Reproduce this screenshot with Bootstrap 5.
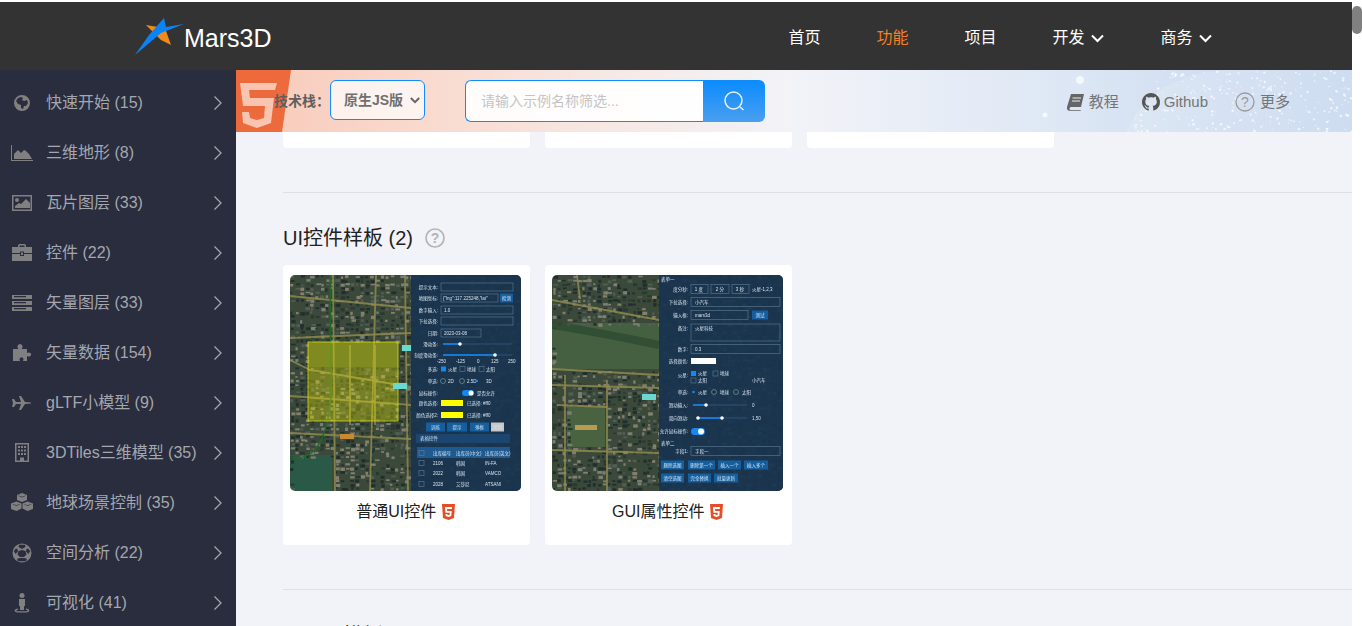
<!DOCTYPE html>
<html lang="zh-CN">
<head>
  <meta charset="UTF-8">
  <title>Mars3D 功能示例</title>
  <meta name="viewport" content="width=device-width, initial-scale=1.0">
  <link href="https://cdn.jsdelivr.net/npm/bootstrap@5.3.0/dist/css/bootstrap.min.css" rel="stylesheet">
  <style>
    html, body { height: 100%; overflow: hidden; }
    body {
      font-family: "Liberation Sans", "Noto Sans CJK SC", sans-serif;
      background: #fff;
      padding-top: 2px;
    }
    .page-wrap { height: 624px; }
    .page-main { width: 1352px; }

    /* 滚动条 */
    .fake-scroll { width: 10px; padding-top: 4px; }
    .fake-thumb { height: 28px; background: #808080; border-radius: 5px; }

    /* 顶部导航 */
    .top-bar { height: 68px; flex: none; background: #333; padding: 4px 0 0 134px; }
    .brand-text { font-size: 25px; color: #fff; line-height: 1; }
    .top-links { margin-left: 517px; gap: 56px; }
    .top-links a { color: #fff; font-size: 16px; text-decoration: none; display: flex; align-items: center; gap: 6px; }
    .top-links a.on { color: #f4801f; }
    .top-links a.has-drop { margin-right: 1px; }

    /* 左侧菜单 */
    .side-menu { width: 236px; background: #2a2d3e; padding-top: 8px; flex: none; }
    .side-item {
      height: 50px; padding-left: 11px; padding-right: 13px;
      color: #a4a7ae; font-size: 16px; text-decoration: none;
    }
    .side-item .ico { width: 22px; height: 22px; margin-right: 13px; fill: #808080; flex: none; }
    .side-item .arrow { width: 10px; height: 16px; margin-left: auto; flex: none; }

    /* 工具条 */
    .content-col { background: #f2f3f8; min-width: 0; }
    .tool-bar {
      height: 62px; flex: none; overflow: hidden; color: #666;
      background: linear-gradient(90deg, #f8c9b8 0%, #f9d9cd 16%, #f6e9e5 34%, #f2f3f8 50%, #dfe8f5 72%, #c5d7ee 100%);
    }
    .bar-art { position: absolute; left: 0; top: 0; }
    .tool-inner { position: relative; padding-left: 38px; height: 100%; }
    .stack-label { font-size: 14px; font-weight: 700; color: #5f5f5f; width: 56px; white-space: nowrap; }
    .stack-select.form-select {
      width: 95px; height: 40px; margin-bottom: 2px; padding: 0 20px 0 13px; font-size: 14px; font-weight: 700; color: #707070;
      border-color: #0d8bff; background-color: rgba(255,255,255,.7);
      background-image: url("data:image/svg+xml,%3csvg xmlns='http://www.w3.org/2000/svg' viewBox='0 0 12 8'%3e%3cpath fill='none' stroke='%23666' stroke-width='2.400' d='M1 1l5 5l5-5'/%3e%3c/svg%3e");
      background-position: right 4px center; background-size: 10px 7px;
    }
    .search-box { width: 300px; height: 42px; margin-left: 40px; flex-wrap: nowrap; }
    .search-box .form-control { font-size: 14px; border-color: #0d8bff; border-right: 0; padding-left: 15px; background: rgba(255,255,255,.92); }
    .search-box .form-control::placeholder { color: #c4c4c4; }
    .search-btn { width: 62px; border: 0; padding: 0; background: linear-gradient(180deg, #0a8bff, #4a9fee); }
    .tool-links { margin-left: auto; padding: 2px 62px 0 0; font-size: 15px; }
    .tool-links a { color: #757575; text-decoration: none; display: flex; align-items: center; gap: 4px; margin-left: 23px; }
    .tool-links a.more-link { margin-left: 27px; gap: 5px; }

    /* 示例区 */
    .sample-area { padding-left: 47px; overflow: hidden; flex: 1; }
    .cut-row { gap: 15.5px; }
    .cut-row div { width: 246.5px; height: 16px; background: #fff; border-radius: 0 0 4px 4px; }
    .split-line { height: 1px; background: #dfe0e5; }
    .first-line { margin-top: 44px; }
    .sec-title { font-size: 20px; color: #222; font-weight: 400; margin: 30px 0 12px; line-height: 30px; height: 30px; }
    .sec-title svg { margin-left: 12px; }
    .sec-next { margin-top: 31px; }
    .tile-row { gap: 15.5px; margin-bottom: 44px; }
    .tile-card { width: 246.5px; height: 280px; border: 0; border-radius: 4px; padding: 10px 8px 0 7px; }
    .tile-pic { width: 231px; height: 216px; display: block; border-radius: 5px; filter: blur(.3px); }
    .tile-name { font-size: 16px; color: #222; height: 42px; gap: 6px; }
    .tile-pic text { font-family: "Liberation Sans", "Noto Sans CJK SC", sans-serif; font-size: 4.5px; fill: #d6e2ee; }
  </style>
</head>
<body>
<div class="page-wrap d-flex">
  <div class="page-main d-flex flex-column">

    <header class="top-bar d-flex align-items-center">
      <svg width="50" height="40" viewBox="0 0 50 40" class="flex-none">
        <path d="M12 7 L24 9 L31 10 L37 27 L27 22 Z" fill="#f08a1d"/>
        <path d="M1 37 L15 17 L30 0 L32 9 L50 6 L27 15 Z" fill="#0a84f5"/>
      </svg>
      <span class="brand-text">Mars3D</span>
      <nav class="top-links d-flex">
        <a href="#">首页</a>
        <a href="#" class="on">功能</a>
        <a href="#">项目</a>
        <a href="#" class="has-drop">开发
          <svg width="13" height="9" viewBox="0 0 13 9"><path d="M1 1.5 L6.5 7 L12 1.5" fill="none" stroke="#fff" stroke-width="2"/></svg></a>
        <a href="#" class="has-drop">商务
          <svg width="13" height="9" viewBox="0 0 13 9"><path d="M1 1.5 L6.5 7 L12 1.5" fill="none" stroke="#fff" stroke-width="2"/></svg></a>
      </nav>
    </header>

    <div class="d-flex flex-grow-1 overflow-hidden">
      <aside class="side-menu overflow-hidden">
        <a href="#" class="side-item d-flex align-items-center">
          <svg class="ico" viewBox="0 0 22 22"><path fill-rule="evenodd" d="M11 3a8 8 0 1 0 0 16a8 8 0 0 0 0-16zM7 6l3-1l2 1l-1 2l2 1l3-1l1 3l-2 3l-2 0l-1 3l-2-1l0-3l-3-1l-2-3z"/></svg>
          <span>快速开始 (15)</span><svg class="arrow" viewBox="0 0 10 16"><path d="M1.5 1.5 L8 8 L1.5 14.5" fill="none" stroke="#a4a7ae" stroke-width="1.3"/></svg>
        </a>
        <a href="#" class="side-item d-flex align-items-center">
          <svg class="ico" viewBox="0 0 22 22"><path d="M0 3h1v15h21v1H0z"/><path d="M3 17V12l4-4l3 3l3-3l2 1l3 3l3 5z"/></svg>
          <span>三维地形 (8)</span><svg class="arrow" viewBox="0 0 10 16"><path d="M1.5 1.5 L8 8 L1.5 14.5" fill="none" stroke="#a4a7ae" stroke-width="1.3"/></svg>
        </a>
        <a href="#" class="side-item d-flex align-items-center">
          <svg class="ico" viewBox="0 0 22 22"><path fill-rule="evenodd" d="M1 3h20v16H1zM2.500 4.500v13h17v-13z"/><circle cx="6" cy="8" r="2"/><path d="M4 16v-2l4-3l2 1l5-5l4 4v5z"/></svg>
          <span>瓦片图层 (33)</span><svg class="arrow" viewBox="0 0 10 16"><path d="M1.5 1.5 L8 8 L1.5 14.5" fill="none" stroke="#a4a7ae" stroke-width="1.3"/></svg>
        </a>
        <a href="#" class="side-item d-flex align-items-center">
          <svg class="ico" viewBox="0 0 22 22"><path d="M7 5V3.500Q7 2 8.500 2h5Q15 2 15 3.500V5h-1.500V3.500h-5V5zM1 5h20v6H13V9.500H9V11H1zM1 12h8v2h4v-2h8v7H1z"/><rect x="10" y="10.500" width="2" height="2.500"/></svg>
          <span>控件 (22)</span><svg class="arrow" viewBox="0 0 10 16"><path d="M1.5 1.5 L8 8 L1.5 14.5" fill="none" stroke="#a4a7ae" stroke-width="1.3"/></svg>
        </a>
        <a href="#" class="side-item d-flex align-items-center">
          <svg class="ico" viewBox="0 0 22 22"><path d="M1 3h20v4H1zM1 9h20v4H1zM1 15h20v4H1z"/><path fill="#2a2d3e" d="M3 4h12v1.200H3zM3 10h12v1.200H3zM3 16h12v1.200H3z"/></svg>
          <span>矢量图层 (33)</span><svg class="arrow" viewBox="0 0 10 16"><path d="M1.5 1.5 L8 8 L1.5 14.500" fill="none" stroke="#a4a7ae" stroke-width="1.3"/></svg>
        </a>
        <a href="#" class="side-item d-flex align-items-center">
          <svg class="ico" viewBox="0 0 22 22"><path d="M2 7h5.500Q6 5.500 6.500 4Q7.500 2 9 2t2.500 2Q12 5.500 10.500 7H16v4q2-1 3.500 0q1.500 1.500 0 3q-1.500 1-3.500 0v5h-4q1-2 0-3q-1.500-1.500-3 0q-1 1-.000 3H2z"/></svg>
          <span>矢量数据 (154)</span><svg class="arrow" viewBox="0 0 10 16"><path d="M1.5 1.5 L8 8 L1.5 14.500" fill="none" stroke="#a4a7ae" stroke-width="1.3"/></svg>
        </a>
        <a href="#" class="side-item d-flex align-items-center">
          <svg class="ico" viewBox="0 0 22 22"><path d="M1 7l2 0l2 3l5 0l-2-6h2l4 6l6 .5q0 1-.000 1l-6 .5l-4 6h-2l2-6l-5 0l-2 3l-2 0l1-3.500z"/></svg>
          <span>gLTF小模型 (9)</span><svg class="arrow" viewBox="0 0 10 16"><path d="M1.5 1.5 L8 8 L1.5 14.500" fill="none" stroke="#a4a7ae" stroke-width="1.3"/></svg>
        </a>
        <a href="#" class="side-item d-flex align-items-center">
          <svg class="ico" viewBox="0 0 22 22"><path fill-rule="evenodd" d="M4 1h14v19H4zM5.500 2.500v16H9V15.500h4v3h3.500v-16z"/><path d="M7 4h2v2H7zM10 4h2v2h-2zM13 4h2v2h-2zM7 7.500h2v2H7zM10 7.500h2v2h-2zM13 7.500h2v2h-2zM7 11h2v2H7zM10 11h2v2h-2zM13 11h2v2h-2z"/></svg>
          <span>3DTiles三维模型 (35)</span><svg class="arrow" viewBox="0 0 10 16"><path d="M1.5 1.5 L8 8 L1.5 14.500" fill="none" stroke="#a4a7ae" stroke-width="1.3"/></svg>
        </a>
        <a href="#" class="side-item d-flex align-items-center">
          <svg class="ico" viewBox="0 0 22 22"><path d="M11 1l5 2v5l-5 2l-5-2V3zM5.500 9.500l5 2v5l-5 2.500L0 17v-5.500zM16.500 9.500l5.500 2V17l-5.500 2l-5-2.500v-5z"/><path fill="#2a2d3e" d="M7.500 3.500l3.500 1.300l3.500-1.300l.5.300l-4 1.700l-4-1.700zM2 12l3.500 1.300l3-1.300l.5.300l-3.500 1.700l-4-1.700zM13 12l3.500 1.300l3.500-1.300l.5.300l-4 1.700l-3.500-1.700z"/></svg>
          <span>地球场景控制 (35)</span><svg class="arrow" viewBox="0 0 10 16"><path d="M1.5 1.5 L8 8 L1.5 14.500" fill="none" stroke="#a4a7ae" stroke-width="1.3"/></svg>
        </a>
        <a href="#" class="side-item d-flex align-items-center">
          <svg class="ico" viewBox="0 0 22 22"><path fill-rule="evenodd" d="M11 1.500a9.500 9.500 0 1 0 0 19a9.500 9.500 0 0 0 0-19zM8 2.800h6l.5 2.200l-3.500 2l-3.500-2zM7.500 9l3.500-1l3.500 1l1 3.500L13 15H9l-2.500-2.500zM2.800 9l2.200-2.500l1.500.5l.5 2.500l-2.500 2.500zM19.200 9l-2.200-2.500l-1.500.5l-.5 2.500l2.500 2.500zM6 17l2.500-1h5l2.500 1l-1 2.300h-8z"/></svg>
          <span>空间分析 (22)</span><svg class="arrow" viewBox="0 0 10 16"><path d="M1.5 1.5 L8 8 L1.5 14.500" fill="none" stroke="#a4a7ae" stroke-width="1.3"/></svg>
        </a>
        <a href="#" class="side-item d-flex align-items-center">
          <svg class="ico" viewBox="0 0 22 22"><circle cx="11" cy="3.500" r="2.500"/><path d="M8 7h6v7h-1v4h-4v-4H8z"/><path d="M7 16.500v1.200c-2 .3-2.500 1-.5 1.500h9c2-.5 1.500-1.200-.5-1.500v-1.200c4 .5 5 3.500 0 4h-8c-5-.5-4-3.500 0-4z"/></svg>
          <span>可视化 (41)</span><svg class="arrow" viewBox="0 0 10 16"><path d="M1.5 1.5 L8 8 L1.5 14.500" fill="none" stroke="#a4a7ae" stroke-width="1.3"/></svg>
        </a>
      </aside>

      <main class="content-col flex-grow-1 d-flex flex-column">
        <div class="tool-bar position-relative">
          <svg id="barArt" class="bar-art" width="1116" height="62" viewBox="0 0 1116 62">
            <path d="M0 0H55L46 62H0z" fill="#ec6a3c"/>
            <path d="M4 13H41L39 20H13L14 28H38L35 53L21 58L7 53L6 42H13L14 48L21 50L28 48L29 36H7z" fill="#f9c5b0"/>
          </svg>
          <div class="tool-inner d-flex align-items-center">
            <span class="stack-label">技术栈：</span>
            <select class="form-select stack-select"><option>原生JS版</option></select>
            <div class="input-group search-box mb-0">
              <input type="text" class="form-control" placeholder="请输入示例名称筛选...">
              <button class="btn search-btn d-flex align-items-center justify-content-center" type="button">
                <svg width="22" height="22" viewBox="0 0 22 22"><circle cx="10.500" cy="10.500" r="8.500" fill="none" stroke="#e8f3ff" stroke-width="1.500"/><path d="M17 17l3.500 3" stroke="#e8f3ff" stroke-width="1.500"/></svg>
              </button>
            </div>
            <div class="tool-links d-flex align-items-center">
              <a href="#"><svg width="19" height="18" viewBox="0 0 19 18"><path d="M5 1H18L15 14H5Q3.500 14 3.500 15.500T5 17H15L14.500 17.800H3.500Q0.500 17.500 1 14z" fill="#666"/><path d="M6.500 5H15M6 8H14" stroke="#e6ecf4" stroke-width="1"/></svg>教程</a>
              <a href="#"><svg width="18" height="18" viewBox="0 0 16 16"><path fill="#555" d="M8 0C3.580 0 0 3.580 0 8c0 3.540 2.290 6.530 5.470 7.590.4.070.55-.17.55-.38 0-.19-.01-.82-.01-1.490-2.010.37-2.530-.49-2.690-.94-.09-.23-.48-.94-.82-1.130-.28-.15-.68-.52-.01-.53.630-.01 1.080.58 1.230.82.720 1.210 1.870.87 2.330.66.070-.52.280-.87.510-1.070-1.780-.2-3.640-.89-3.640-3.950 0-.87.310-1.590.82-2.150-.08-.2-.36-1.020.08-2.120 0 0 .67-.21 2.200.82.640-.18 1.320-.27 2-.27s1.360.09 2 .27c1.530-1.040 2.200-.82 2.200-.82.440 1.100.16 1.920.08 2.120.51.560.82 1.270.82 2.150 0 3.070-1.870 3.750-3.650 3.950.29.250.54.730.54 1.480 0 1.070-.01 1.930-.01 2.200 0 .21.150.46.550.38A8.010 8.010 0 0 0 16 8c0-4.420-3.580-8-8-8z"/></svg>Github</a>
              <a href="#" class="more-link"><svg width="20" height="20" viewBox="0 0 20 20"><circle cx="10" cy="10" r="9" fill="none" stroke="#9a9a9a" stroke-width="1.300"/><text x="10" y="15" text-anchor="middle" font-size="14" fill="#9a9a9a">?</text></svg>更多</a>
            </div>
          </div>
        </div>

        <div class="sample-area">
          <div class="cut-row d-flex"><div></div><div></div><div></div></div>
          <div class="split-line first-line"></div>

          <h5 class="sec-title d-flex align-items-center">UI控件样板 (2)
            <svg width="20" height="20" viewBox="0 0 20 20"><circle cx="10" cy="10" r="9" fill="none" stroke="#b4b4b4" stroke-width="1.700"/><text x="10" y="15" text-anchor="middle" font-size="14" font-weight="700" fill="#b4b4b4">?</text></svg>
          </h5>
          <div class="tile-row d-flex">
            <div class="card tile-card">
              <svg id="picOne" class="tile-pic" viewBox="0 0 231 216"></svg>
              <div class="tile-name d-flex align-items-center justify-content-center">普通UI控件
                <svg width="13" height="16" viewBox="0 0 13 16"><path d="M0 0H13L12 14L6.500 16L1 14z" fill="#e44d26"/><path d="M3 3H10L9.800 5H5L5.200 7H9.700L9.300 12L6.500 13L3.700 12L3.500 10H5.300L5.400 10.700L6.500 11L7.600 10.700L7.800 8.800H3.400z" fill="#fff"/></svg>
              </div>
            </div>
            <div class="card tile-card">
              <svg id="picTwo" class="tile-pic" viewBox="0 0 231 216"></svg>
              <div class="tile-name d-flex align-items-center justify-content-center">GUI属性控件
                <svg width="13" height="16" viewBox="0 0 13 16"><path d="M0 0H13L12 14L6.500 16L1 14z" fill="#e44d26"/><path d="M3 3H10L9.800 5H5L5.200 7H9.700L9.300 12L6.500 13L3.700 12L3.500 10H5.300L5.400 10.700L6.500 11L7.600 10.700L7.800 8.800H3.400z" fill="#fff"/></svg>
              </div>
            </div>
          </div>
          <div class="split-line"></div>

          <h5 class="sec-title sec-next d-flex align-items-center">UI工具模板 (2)
            <svg width="20" height="20" viewBox="0 0 20 20"><circle cx="10" cy="10" r="9" fill="none" stroke="#b4b4b4" stroke-width="1.700"/></svg>
          </h5>
        </div>
      </main>
    </div>
  </div>
  <div class="fake-scroll"><div class="fake-thumb"></div></div>
</div>

<script src="https://cdn.jsdelivr.net/npm/bootstrap@5.3.0/dist/js/bootstrap.bundle.min.js"></script>
<script>
  // 随机数固定种子，保证每次绘制一样
  function seeded(s) {
    return function () { s = (s * 16807) % 2147483647; return s / 2147483647; };
  }
  function rect(x, y, w, h, fill, extra) {
    return '<rect x="' + x + '" y="' + y + '" width="' + w + '" height="' + h + '" fill="' + fill + '" ' + (extra || '') + '/>';
  }
  function label(x, y, t, anchor, fill) {
    return '<text x="' + x + '" y="' + (y + 1.500) + '" text-anchor="' + (anchor || 'start') + '"' + (fill ? ' style="fill:' + fill + '"' : '') + '>' + t + '</text>';
  }
  function box(x, y, w, h) {
    return rect(x, y - (h || 8) / 2, w, h || 8, 'none', 'stroke="#5f7d98" stroke-width=".6"');
  }
  function btn(x, y, w, t, c) {
    return rect(x, y - 4.500, w, 9, c || '#165f9f') + label(x + w / 2, y, t, 'middle', '#cfe2f3');
  }
  function slider(x1, x2, end, y) {
    return rect(x1, y - .8, x2 - x1, 1.600, '#27486b') + rect(x1, y - .8, end - x1, 1.600, '#1487f0') + '<circle cx="' + end + '" cy="' + y + '" r="1.800" fill="#fff"/>';
  }

  // 卫星底图：绿地 + 成片的房屋 + 黄色道路，整体做一点模糊
  function mapBase(seed, roads, greens) {
    var r = seeded(seed), s = rect(0, 0, 231, 216, '#3b4a3a');
    (greens || []).forEach(function (g) { s += rect(g[0], g[1], g[2], g[3], g[4]); });
    for (var y = 0; y < 216; y += 4) {
      for (var x = 0; x < 231; x += 5) {
        if (r() < .7) {
          var skip = (greens || []).some(function (g) { return x > g[0] && x < g[0] + g[2] && y > g[1] && y < g[1] + g[3]; });
          if (skip) continue;
          var tone = ['#7d7f74', '#232f2d', '#525c54', '#857f6e', '#2b3733', '#232f2d'][Math.floor(r() * 6)];
          s += rect(x + r() * 1.500, y + r() * 1.500, 2 + r() * 3, 1.500 + r() * 2, tone);
        }
      }
    }
    roads.forEach(function (p) {
      s += '<path d="' + p + '" fill="none" stroke="#8f8a4e" stroke-width="1.800" stroke-opacity=".85"/>';
    });
    return '<defs><filter id="soft' + seed + '"><feGaussianBlur stdDeviation=".45"/></filter></defs><g filter="url(#soft' + seed + ')">' + s + '</g>';
  }

  var one = mapBase(48271, [
    'M0 21 L121 33', 'M0 63 L121 58', 'M0 85 L20 95 L121 112', 'M43 0 L45 216', 'M86 0 L80 216',
    'M0 158 L121 164', 'M0 121 L121 130', 'M115 0 L118 216', 'M60 70 L60 150', 'M85 70 L85 150'
  ], [[0, 180, 42, 36, '#2a5a46'], [18, 67, 90, 25, '#4a5a30']]);
  one += '<path d="M40 0 L41 90 Q44 150 25 175 Q12 186 0 182" fill="none" stroke="#1f6a2a" stroke-width="1.500"/>';
  one += rect(18, 67, 90, 79, '#e8e800', 'fill-opacity=".34" stroke="#d8dc10" stroke-width=".8"');
  one += rect(112, 70, 10, 6, '#6ad9d0') + rect(103, 108, 14, 6, '#6ad9d0') + rect(50, 159, 14, 5, '#c88a30');
  one += rect(121, 0, 110, 216, '#18344f', 'fill-opacity=".94"');
  one += label(148, 12, '提示文本:', 'end') + box(151, 12, 72) + label(148, 23, '地图坐标:', 'end') + box(151, 23, 57) + label(153, 23, '{"lng":117.225248,"lat"') + btn(210, 23, 13, '检测');
  one += label(148, 35, '数字输入:', 'end') + box(151, 35, 72) + label(154, 35, '1.0');
  one += label(148, 46, '下拉选择:', 'end') + box(151, 46, 72);
  one += label(148, 58, '日期:', 'end') + box(151, 58, 40) + label(154, 58, '2023-03-08');
  one += label(148, 69, '滑动条:', 'end') + slider(153, 222, 170, 69);
  one += label(148, 80, '刻度滑动条:', 'end') + slider(153, 222, 205, 80) + label(147, 86, '-250') + label(166, 86, '-125') + label(187, 86, '0') + label(201, 86, '125') + label(218, 86, '250');
  one += label(148, 94, '多选:', 'end') + rect(151, 91.500, 5, 5, '#1487f0') + label(158, 94, '火星') + box(170, 94, 5, 5) + label(177, 94, '地球') + box(189, 94, 5, 5) + label(196, 94, '太阳');
  one += label(148, 106, '单选:', 'end') + label(158, 106, '2D') + label(177, 106, '2.5D') + label(196, 106, '3D');
  one += '<circle cx="153" cy="106" r="2.500" fill="none" stroke="#9bb" stroke-width=".5"/><circle cx="172" cy="106" r="2.500" fill="none" stroke="#9bb" stroke-width=".5"/><circle cx="187" cy="106" r="1.200" fill="#1487f0"/>';
  one += label(148, 118, '鼠标操作:', 'end') + rect(172, 115, 12, 6, '#1487f0', 'rx="3"') + '<circle cx="181" cy="118" r="2.500" fill="#fff"/>' + label(187, 118, '是否允许');
  one += label(148, 128, '颜色选择:', 'end') + rect(151, 125, 22, 6, '#ffff00') + label(177, 128, '已选择: #ff0') + label(148, 140, '颜色选择2:', 'end') + rect(151, 137, 22, 6, '#ffff00') + label(177, 140, '已选择: #ff0');
  one += btn(136, 152, 19, '训练') + btn(157, 152, 20, '提示') + btn(180, 152, 19, '弹框') + btn(201, 152, 13, '禁用', '#c8c8c8');
  one += rect(126, 159, 94, 9, '#1c4670') + label(130, 163, '表格控件');
  one += rect(127, 172, 93, 11, '#1e5a90') + box(129, 178, 5, 5) + label(143, 178, '出库编号') + label(166, 178, '出库员(中文)') + label(195, 178, '出库员(英文)');
  [[188, '2106', '韩国', 'IN-FA'], [198, '2022', '韩国', 'VAMCO'], [209, '2028', '艾莎尼', 'ATSANI']].forEach(function (t) {
    one += box(129, t[0], 5, 5) + label(143, t[0], t[1]) + label(166, t[0], t[2]) + label(195, t[0], t[3]);
  });
  document.getElementById('picOne').innerHTML = one;

  var two = mapBase(9137, [
    'M0 25 L107 45', 'M0 94 L107 100', 'M0 110 L107 113', 'M0 175 L107 178', 'M13 100 L13 216',
    'M55 105 L55 216', 'M25 0 L28 24', 'M5 130 L55 132'
  ], [[0, 48, 107, 46, '#45603f'], [15, 130, 38, 42, '#4a6240']]);
  two += '<path d="M0 50 Q50 58 107 70" fill="none" stroke="#2d4a32" stroke-width="8" stroke-opacity=".8"/>';
  two += rect(90, 119, 14, 6, '#6ad9d0') + rect(23, 150, 22, 5, '#b89a50');
  two += rect(107, 0, 124, 216, '#18344f', 'fill-opacity=".93"');
  two += label(109, 4, '表单一');
  two += label(136, 14, '度分秒:', 'end') + box(139, 14, 17, 9) + label(147, 14, '1 度', 'middle') + box(159, 14, 18, 9) + label(168, 14, '2 分', 'middle') + box(180, 14, 17, 9) + label(188, 14, '3 秒', 'middle') + label(200, 14, '火星-1,2,3');
  two += label(136, 27, '下拉选择:', 'end') + box(139, 27, 89, 9) + label(143, 27, '小汽车');
  two += label(136, 40, '输入框:', 'end') + box(139, 40, 57, 9) + label(143, 40, 'mars3d') + btn(200, 40, 16, '测试');
  two += label(136, 53, '备注:', 'end') + box(139, 57.500, 89, 17) + label(143, 53, '火星科技');
  two += label(136, 74, '数字:', 'end') + box(139, 74, 89, 9) + label(143, 74, '0.3');
  two += label(136, 86, '选择颜色:', 'end') + rect(139, 83, 25, 6, '#fff');
  two += label(136, 100, '火星:', 'end') + rect(139, 96, 5, 5, '#1487f0') + label(146, 98.500, '火星') + box(161, 98.500, 5, 5) + label(168, 98.500, '地球') + box(139, 105.500, 5, 5) + label(146, 105.500, '太阳') + label(200, 105.500, '小汽车');
  two += label(136, 117, '单选:', 'end') + '<circle cx="141.500" cy="117" r="1.300" fill="#1487f0"/><circle cx="162" cy="117" r="2.500" fill="none" stroke="#9bb" stroke-width=".5"/><circle cx="184" cy="117" r="2.500" fill="none" stroke="#9bb" stroke-width=".5"/>' + label(146, 117, '火星') + label(168, 117, '地球') + label(190, 117, '太阳');
  two += label(136, 130, '滑动输入:', 'end') + slider(141, 195, 154, 130) + label(200, 130, '0');
  two += label(136, 143, '双向滑动:', 'end') + slider(146, 195, 170, 143) + '<circle cx="146" cy="143" r="1.800" fill="#fff"/>' + label(200, 143, '1,50');
  two += label(136, 156, '允许鼠标操作:', 'end') + rect(139, 153, 14, 7, '#1487f0', 'rx="3.500"') + '<circle cx="149" cy="156.500" r="3" fill="#fff"/>';
  two += label(109, 168, '表单二') + label(136, 176, '字段1:', 'end') + box(139, 176, 89, 9) + label(143, 176, '字段一');
  two += btn(109, 190, 23, '删除选图') + btn(136, 190, 27, '删除第一个') + btn(166, 190, 23, '插入一个') + btn(192, 190, 24, '插入多个');
  two += btn(109, 203, 23, '清空选图') + btn(136, 203, 23, '完全替换') + btn(162, 203, 24, '批量更新');
  document.getElementById('picTwo').innerHTML = two;

  // 工具条右侧的科技感光点
  var art = document.getElementById('barArt'), r2 = seeded(2024), dots = '';
  dots += '<path d="M890 62 Q915 5 990 0 L1116 0 L1116 62z" fill="#fff" fill-opacity=".14"/>';
  for (var i = 0; i < 320; i++) {
    var dx = 890 + r2() * 226, dy = r2() * 62;
    if (dx < 890 + (62 - dy) * .6) continue;
    dots += '<circle cx="' + dx.toFixed(1) + '" cy="' + dy.toFixed(1) + '" r="' + (.3 + r2() * 1).toFixed(1) + '" fill="#fff" fill-opacity=".7"/>';
  }
  dots += '<circle cx="844" cy="10" r="4" fill="#fff" fill-opacity=".7"/><circle cx="809" cy="45" r="2.500" fill="#fff" fill-opacity=".7"/>';
  art.insertAdjacentHTML('beforeend', dots);
</script>
</body>
</html>
